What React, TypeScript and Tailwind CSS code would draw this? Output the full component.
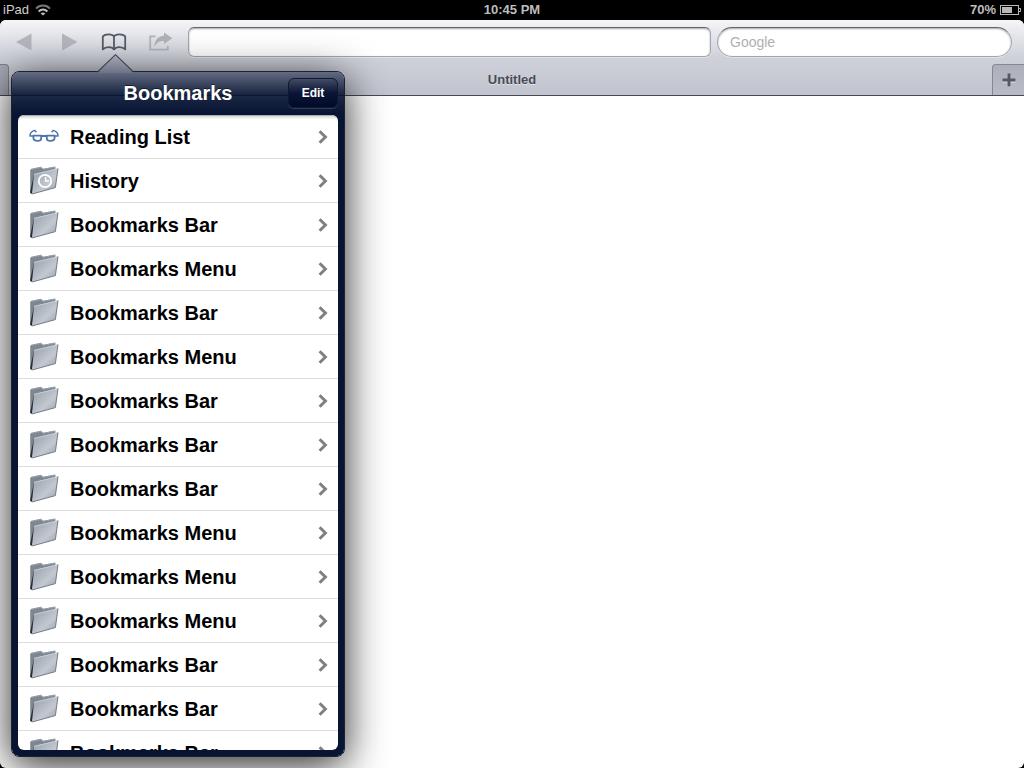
import React from 'react';

type IconKind = 'glasses' | 'history' | 'folder';

interface BookmarkItem {
    title: string;
    icon: IconKind;
}

const items: BookmarkItem[] = [
    { title: 'Reading List', icon: 'glasses' },
    { title: 'History', icon: 'history' },
    { title: 'Bookmarks Bar', icon: 'folder' },
    { title: 'Bookmarks Menu', icon: 'folder' },
    { title: 'Bookmarks Bar', icon: 'folder' },
    { title: 'Bookmarks Menu', icon: 'folder' },
    { title: 'Bookmarks Bar', icon: 'folder' },
    { title: 'Bookmarks Bar', icon: 'folder' },
    { title: 'Bookmarks Bar', icon: 'folder' },
    { title: 'Bookmarks Menu', icon: 'folder' },
    { title: 'Bookmarks Menu', icon: 'folder' },
    { title: 'Bookmarks Menu', icon: 'folder' },
    { title: 'Bookmarks Bar', icon: 'folder' },
    { title: 'Bookmarks Bar', icon: 'folder' },
    { title: 'Bookmarks Bar', icon: 'folder' },
];

const WifiIcon = () => (
    <svg width="16" height="12" viewBox="0 0 16 12" fill="none" stroke="#bdbdbd" strokeWidth="2">
        <path d="M1 4.6C5 0.6 11 0.6 15 4.6" stroke="#777" />
        <path d="M3.6 7.4C6.2 5 9.8 5 12.4 7.4" />
        <path d="M8 11.6L5.7 9.4C7 8.3 9 8.3 10.3 9.4Z" fill="#bdbdbd" stroke="none" />
    </svg>
);

const BatteryIcon = () => (
    <svg width="21" height="10" viewBox="0 0 21 10" fill="none">
        <rect x="0.5" y="0.5" width="18" height="9" stroke="#b8b8b8" />
        <path d="M19 3.5H20.5V6.5H19" stroke="#b8b8b8" />
        <rect x="2" y="2" width="10" height="6" fill="#b8b8b8" />
    </svg>
);

const BookIcon = () => (
    <svg width="26" height="19" viewBox="0 0 26 19" fill="none" stroke="#555b65" strokeWidth="1.8" strokeLinejoin="round">
        <path d="M13 3.4C11.6 0.6 4 0.6 1.8 3.4V16.4C4.6 13.4 11 13.4 13 16.4C15 13.4 21.4 13.4 24.2 16.4V3.4C22 0.6 14.4 0.6 13 3.4Z" />
        <path d="M13 3.4V16.4" />
    </svg>
);

const ShareIcon = () => (
    <svg width="24" height="20" viewBox="0 0 24 20">
        <path d="M6.5 4.4H1.2V17.6H18.8V14" fill="none" stroke="#b0b4bc" strokeWidth="1.8" />
        <path d="M15 0.5L23.3 6.3L15 12V9C10.8 8.8 8 10.4 5.4 14.4C5.6 8.4 9 4 15 3.8Z" fill="#aeb2ba" />
    </svg>
);

const GlassesIcon = () => (
    <svg width="30" height="14" viewBox="0 0 30 14" fill="none" stroke="#4c76a8" strokeWidth="1.8" strokeLinejoin="round">
        <path d="M4.4 6.6H12.2V9.4C12.2 11.2 11 11.8 8.6 11.8C5.6 11.8 4.4 11 4.4 9Z" />
        <path d="M17.8 6.6H25.6V9C25.6 11 24.4 11.8 21.4 11.8C19 11.8 17.8 11.2 17.8 9.4Z" />
        <path d="M12.2 7H17.8" />
        <path d="M4.4 7H1C1 4.4 2.6 2.2 5.6 1.4L7.4 3.2M25.6 7H29C29 4.4 27.4 2.2 24.4 1.4L22.6 3.2" strokeWidth="1.5" />
    </svg>
);

const FolderIcon = ({ clock }: { clock?: boolean }) => (
    <svg width="30" height="30" viewBox="0 0 30 30">
        <path d="M1.2 5L2.4 3.8L12 1.8L14 3.8L26.4 1.4V6L3 28.8L1.2 28Z" fill="#7d8791" />
        <path d="M2.4 4.4L12 2.4L14 4.4L26 2.2" fill="none" stroke="#a3abb4" strokeWidth="0.7" />
        <path d="M2.6 29L1 27.6L5 9.6L9 8.6Z" fill="#27303a" />
        <path d="M5 9.2L29 3.4L26.4 22.6L3 29Z" fill="url(#folderFront)" />
        <path d="M5 9.4L29 3.6" stroke="#d6dae0" strokeWidth="0.8" />
        <path d="M29 3.4L26.4 22.6L3 29" fill="none" stroke="#68717c" strokeWidth="0.9" />
        {clock && (
            <g fill="none" stroke="#fff" strokeWidth="1.8">
                <circle cx="16" cy="16" r="6.2" />
                <path d="M16.6 12V16H20" strokeWidth="1.4" />
            </g>
        )}
    </svg>
);

const ItemIcon = ({ kind }: { kind: IconKind }) => {
    if (kind === 'glasses') return <GlassesIcon />;
    return <FolderIcon clock={kind === 'history'} />;
};

const StatusBar = () => (
    <header className="grid grid-cols-3 items-center h-5 shrink-0 px-[3px] bg-black text-[#bdbdbd] text-[13px] leading-4 font-bold">
        <div className="flex items-center gap-1.5">
            <span className="font-normal text-[#d0d0d0]">iPad</span>
            <WifiIcon />
        </div>
        <span className="text-center">10:45 PM</span>
        <div className="flex items-center justify-end gap-1">
            <span>70%</span>
            <BatteryIcon />
        </div>
    </header>
);

const Toolbar = () => (
    <div className="h-[76px] shrink-0 flex flex-col border-b border-[#454954] bg-linear-to-b from-[#f5f5f7] via-[#cfd1da] via-50% to-[#c1c3ce]">
        <div className="flex items-center h-11 pl-4 pr-3">
            <button aria-label="Back" className="w-[46px]">
                <svg width="16" height="18" viewBox="0 0 16 18" fill="#b3b6be"><path d="M0 9L15.5 0.5V17.5Z" /></svg>
            </button>
            <button aria-label="Forward" className="w-[39px]">
                <svg width="16" height="18" viewBox="0 0 16 18" fill="#b3b6be"><path d="M15.5 9L0 0.5V17.5Z" /></svg>
            </button>
            <button aria-label="Bookmarks" className="w-12"><BookIcon /></button>
            <button aria-label="Share" className="w-[39px]"><ShareIcon /></button>
            <input aria-label="Address" className="flex-1 min-w-0 h-[30px] px-2 bg-white rounded-md border border-[#a3a6af] border-t-[#62656d] shadow-[inset_0_1px_2px_rgba(0,0,0,0.35),0_1px_0_rgba(255,255,255,0.4)]" />
            <input
                aria-label="Search"
                placeholder="Google"
                className="w-[295px] h-[30px] ml-1.5 px-3 bg-white rounded-full border border-[#a3a6af] border-t-[#62656d] text-sm placeholder:text-[#b0b0b0] shadow-[inset_0_1px_2px_rgba(0,0,0,0.35),0_1px_0_rgba(255,255,255,0.4)]"
            />
        </div>
        <div className="grid grid-cols-[1fr_auto_1fr] flex-1">
            <div className="w-[9px] rounded-tr border-t border-r border-[#7d808b] bg-[#a9acb8]" />
            <h1 className="self-center text-[13px] leading-4 font-bold text-[#474b55] [text-shadow:0_1px_0_rgba(255,255,255,0.5)]">Untitled</h1>
            <button aria-label="New tab" className="justify-self-end flex items-center justify-center w-8 rounded-tl border-t border-l border-[#858894] bg-linear-to-b from-[#adafba] to-[#b9bbc6]">
                <svg width="14" height="14" viewBox="0 0 14 14">
                    <path d="M7 1.5V14.5M0.5 8H13.5" stroke="#dfe1e8" strokeWidth="3" />
                    <path d="M7 0.5V13.5M0.5 7H13.5" stroke="#555964" strokeWidth="3" />
                </svg>
            </button>
        </div>
    </div>
);

const BookmarkRow = ({ item }: { item: BookmarkItem }) => (
    <li>
        <button className="flex items-center w-full h-11 pl-[11px] pr-2.5 border-b border-[#dcdcdc] text-left">
            <span className="flex justify-center w-[30px] pb-0.5"><ItemIcon kind={item.icon} /></span>
            <span className="flex-1 pl-[11px] text-xl leading-6 font-bold text-black">{item.title}</span>
            <svg width="10" height="14" viewBox="0 0 10 14" fill="none" stroke="#808080" strokeWidth="3">
                <path d="M1.6 1.2L7.4 7L1.6 12.8" />
            </svg>
        </button>
    </li>
);

const BookmarksPopover = () => (
    <section className="absolute left-[11px] top-[51px] bottom-[11px] w-[334px] flex flex-col px-1.5 pb-1.5 rounded-lg border border-[#1d232e] bg-[linear-gradient(to_bottom,rgba(52,62,90,0.68),rgba(4,18,48,0.9)_23px,rgba(7,20,51,0.95)_30px,#071433_42px)] bg-clip-padding shadow-[0_8px_40px_rgba(0,0,0,0.85)]">
        <svg className="absolute left-[85px] -top-[18px]" width="38" height="19" viewBox="0 0 38 19">
            <path d="M1 18.5L18.5 1L36 18.5V19H1Z" fill="url(#arrowFill)" />
            <path d="M0.5 18L18.5 0.7L36.5 18" fill="none" stroke="#3a404d" strokeWidth="1.1" />
        </svg>
        <div className="grid grid-cols-[1fr_auto_1fr] items-center h-[43px] pb-0.5 shrink-0">
            <h2 className="col-start-2 text-xl leading-6 font-bold text-white [text-shadow:0_-1px_0_rgba(0,0,0,0.5)]">Bookmarks</h2>
            <button className="justify-self-end w-[50px] h-[30px] rounded-md border border-[#10182e] bg-linear-to-b from-[#444b63] via-[#0b1536] via-50% to-[#020a28] shadow-[0_1px_0_rgba(255,255,255,0.15)] text-xs font-bold text-white">Edit</button>
        </div>
        <ul className="flex-1 min-h-0 overflow-hidden rounded-md bg-white">
            {items.map((item, i) => (
                <BookmarkRow key={i} item={item} />
            ))}
        </ul>
        <div className="pointer-events-none absolute inset-x-1.5 top-[43px] h-2 rounded-t-md border-t border-[#a8adb8] bg-linear-to-b from-black/15 to-transparent to-50%" />
    </section>
);

export default function App() {
    return (
        <div className="h-screen flex flex-col bg-black font-['Liberation_Sans',Arial,sans-serif]">
            <svg width="0" height="0" className="absolute">
                <defs>
                    <linearGradient id="folderFront" x1="0" y1="0" x2="1" y2="1">
                        <stop offset="0" stopColor="#949ca7" />
                        <stop offset="0.6" stopColor="#c3c8d0" />
                        <stop offset="1" stopColor="#9199a5" />
                    </linearGradient>
                    <linearGradient id="arrowFill" x1="0" y1="0" x2="0" y2="1">
                        <stop offset="0" stopColor="#a5a9b5" />
                        <stop offset="1" stopColor="#6c7385" />
                    </linearGradient>
                </defs>
            </svg>
            <StatusBar />
            <main className="relative flex flex-col flex-1 min-h-0 overflow-hidden rounded-md bg-white">
                <Toolbar />
                <BookmarksPopover />
            </main>
        </div>
    );
}
